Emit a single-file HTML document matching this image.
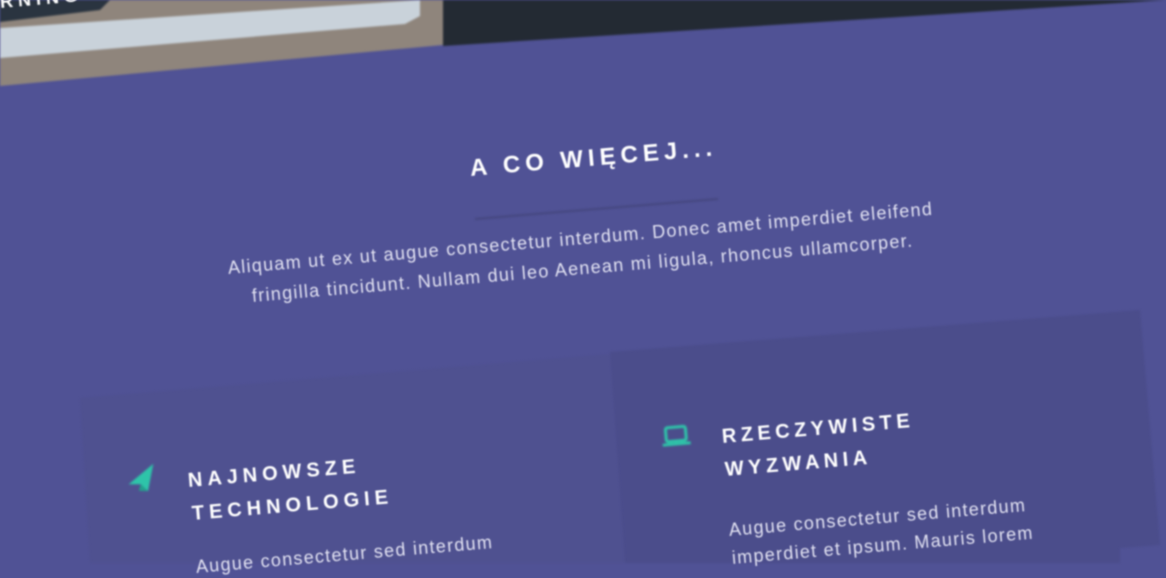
<!DOCTYPE html>
<html><head><meta charset="utf-8"><style>
html,body{margin:0;padding:0}
body{width:1166px;height:563px;overflow:hidden;background:#505295;position:relative;font-family:"Liberation Sans",sans-serif}
.a{position:absolute;transform-origin:0 50%;transform:rotate(-4.8deg);white-space:nowrap;filter:blur(0.8px)}
.h{color:#fff;font-weight:bold;letter-spacing:5px}
.p{color:#e2e2f2;font-size:18px;letter-spacing:1.3px}
</style></head><body>
<svg width="1166" height="563" style="position:absolute;left:0;top:0;filter:blur(1px)">
<polygon points="0,0 443,0 443,45 0,86" fill="#8f857c"/>
<polygon points="0,28 420,0 420,16 405,24 0,58" fill="#c9d2da"/>
<polygon points="0,0 110,0 100,10 0,22" fill="#2a3440"/>
<polygon points="443,0 1166,0 1166,0 443,46" fill="#232a33"/>
<polygon points="80,398 610,354 625,563 90,563" fill="#4f5190"/>
<polygon points="610,352 1140,310 1160,545 1120,548 1120,563 625,563" fill="#4b4d8b"/>
<line x1="475" y1="219" x2="718" y2="199" stroke="#45477f" stroke-width="2"/>
<g transform="translate(142,480) rotate(-10)" fill="#2ec4a9"><polygon points="-14,2 14,-14 4,12 -2,4"/><polygon points="-2,4 4,12 -5,10" fill="#23a08c"/></g>
<g transform="translate(676,436) rotate(-5)" fill="none" stroke="#2ec4a9" stroke-width="3"><rect x="-10" y="-9" width="20" height="14" rx="2"/><line x1="-14" y1="8" x2="14" y2="8"/></g>
</svg>
<div class="a h" style="left:470px;top:155px;font-size:24px;letter-spacing:5px">A CO WIĘCEJ...</div>
<div class="a p" style="left:228px;top:258px">Aliquam ut ex ut augue consectetur interdum. Donec amet imperdiet eleifend</div>
<div class="a p" style="left:252px;top:286px">fringilla tincidunt. Nullam dui leo Aenean mi ligula, rhoncus ullamcorper.</div>
<div class="a h" style="left:188px;top:470px;font-size:20px">NAJNOWSZE</div>
<div class="a h" style="left:192px;top:503px;font-size:20px">TECHNOLOGIE</div>
<div class="a p" style="left:196px;top:557px">Augue consectetur sed interdum</div>
<div class="a h" style="left:722px;top:426px;font-size:20px;letter-spacing:4.5px">RZECZYWISTE</div>
<div class="a h" style="left:725px;top:459px;font-size:20px;letter-spacing:4.5px">WYZWANIA</div>
<div class="a p" style="left:729px;top:520px">Augue consectetur sed interdum</div>
<div class="a p" style="left:732px;top:548px">imperdiet et ipsum. Mauris lorem</div>
<div class="a h" style="left:0px;top:-8px;font-size:18px">RNING</div>
</body></html>
